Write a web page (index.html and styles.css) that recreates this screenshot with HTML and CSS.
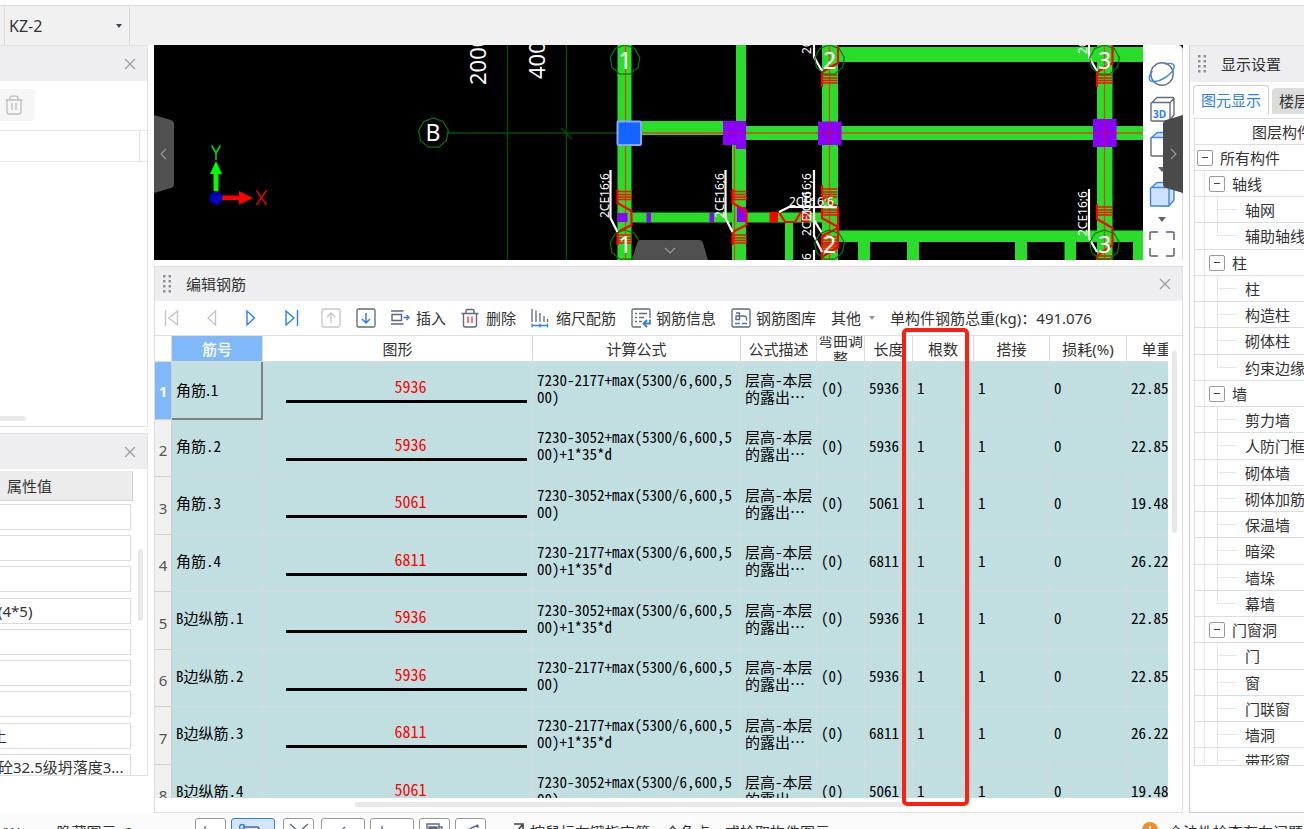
FILE: index.html
```html
<!DOCTYPE html>
<html lang="zh-CN">
<head>
<meta charset="utf-8">
<title>编辑钢筋</title>
<link rel="stylesheet" href="styles.css">
</head>
<body>
<header class="topbar">
  <label class="component-picker"><span class="sr">构件</span>
    <select><option>KZ-2</option></select>
    <svg class="caret" width="6" height="4" viewBox="0 0 6 4"><path d="M0 0h6L3 4z" fill="#3f4a5c"/></svg>
  </label>
</header>

<main class="workspace">
  <aside class="left">
    <section class="panel list-panel">
      <div class="panel-head"><button class="close" aria-label="关闭"><svg width="12" height="12" viewBox="0 0 12 12"><path d="M1 1l10 10M11 1L1 11" stroke="#a0a0a4" stroke-width="1.4"/></svg></button></div>
      <div class="list-tools"><button class="delete" aria-label="删除"><svg width="18" height="20" viewBox="0 0 18 20" fill="none" stroke="#bdbdbd" stroke-width="1.3"><path d="M.5 5h17M5 5V3q0-1.800 2-1.800h4q2 0 2 1.800v2M2 5v12q0 2 2 2h10q2 0 2-2V5M7 8v7M11 8v7"/></svg></button></div>
      <div class="list-columns"><span></span></div>
      <div class="list-body"><span class="thumb-x"></span></div>
    </section>
    <section class="panel props-panel">
      <div class="panel-head"><button class="close" aria-label="关闭"><svg width="12" height="12" viewBox="0 0 12 12"><path d="M1 1l10 10M11 1L1 11" stroke="#a0a0a4" stroke-width="1.4"/></svg></button></div>
      <div class="props-body">
        <div class="props-main">
          <h2>属性值</h2>
          <div class="props-fields">
            <input aria-label="属性1"><input aria-label="属性2"><input aria-label="属性3">
            <input class="nudge" aria-label="属性4" value="(4*5)">
            <input aria-label="属性5"><input aria-label="属性6"><input aria-label="属性7">
            <input class="cut" aria-label="属性8" value="土">
            <input class="nudge" aria-label="属性9" value="砼32.5级坍落度3...">
          </div>
        </div>
        <span class="thumb-y"></span>
      </div>
    </section>
  </aside>

  <div class="center">
    <section class="viewport">
      <svg class="drawing" viewBox="154 45 989 215" preserveAspectRatio="xMinYMin slice">
        <defs>
          <polygon id="ring" points="0,-15 9.600,-11.500 14.800,-2.600 13,7.500 5.100,14.100 -5.100,14.100 -13,7.500 -14.800,-2.600 -9.600,-11.500" fill="none" stroke="#087808" stroke-width="1.200"/>
          <g id="hatch" fill="none" stroke="#f01404" stroke-width="1.600"><path d="M0 0H15M0 3H15M0 5.500H15M0 8H15"/></g>
          <g id="bend" fill="none" stroke="#f00" stroke-width="2.200"><path d="M617.500 189v14l14 8v14l-14 7v13"/></g>
          <g id="leader" fill="none" stroke="#fff" stroke-width="2.200"><path d="M610.500 170v48l7 14"/></g>
        </defs>
        <g stroke="#004d00" stroke-width="1.500" fill="none">
          <path d="M507.500 45V260M566.500 45V260M448 133H629M561 128l11 11"/>
        </g>
        <g fill="#2bdd2b">
          <path d="M617.500 45h14v215h-14zM736 45h10v215h-10zM732 140h4v120h-4zM631 121h105v14H631zM746 126h397v14H746zM631 212.500h205v10H631zM822 45h16v215h-16zM1097 45h15.500v215H1097zM838 47h305v15H838zM838 230.500h305V242H838zM858 242h12v18h-12zM907 242h12v18h-12zM1015 242h12v18h-12zM1064.500 242H1076v18h-11.500zM1133 242h10v18h-10zM785 222h8v38h-8z"/>
        </g>
        <g stroke="#cf4a18" stroke-width="1.300" fill="none">
          <path d="M625.500 45V260M829.500 45V260M1104.500 45V260M629 133H1143M734.500 133V260"/>
        </g>
        <g fill="#8b00ff">
          <path d="M723 121h23v28h-10v-4h-13zM818 121.500h23.500V145H818zM1093 119h23.500v28H1093zM617.500 213h10v9h-10zM646.500 213h4.500v9h-4.500zM709.500 213h4.500v9h-4.500zM737 207h9v15h-9z"/>
        </g>
        <path d="M829.500 121v24M1104.500 119v28M723 133h23M818 133h23M1093 133h23" stroke="#b8105c" stroke-width="1.200"/>
        <rect x="617.500" y="121.500" width="23.500" height="23.500" rx="1" fill="#1464ff" stroke="#86a8ff" stroke-width="2"/>
        <path d="M625.500 132v-10" stroke="#2b50d0" stroke-width="1"/>
        <use href="#hatch" x="617" y="191.500"/><use href="#hatch" x="617" y="235"/><use href="#bend"/>
        <use href="#hatch" x="732" y="191.500"/><use href="#hatch" x="732" y="235"/><use href="#bend" x="115"/>
        <use href="#hatch" x="822.500" y="75"/><use href="#hatch" x="1097.500" y="75"/>
        <use href="#hatch" x="822.500" y="189"/><use href="#hatch" x="822.500" y="207"/><use href="#hatch" x="822.500" y="237"/><use href="#hatch" x="822.500" y="244"/>
        <use href="#hatch" x="1097.500" y="207"/><use href="#hatch" x="1097.500" y="256"/>
        <g fill="none" stroke="#f00" stroke-width="2.200">
          <path d="M838 45v18l-16 9v15M1112.500 45v18l-15.500 9v15M822 185v13l16 9v40l-16 10M822 203v15l16 9M838 228l-16 8v24M1097 204v15l15.500 9v17l-15.500 11v4M779 212l6 10h10l6-10"/>
        </g>
        <path d="M769.500 212h8.500v10.500h-8.500zM801 212h8.500v10.500H801z" fill="#f00"/>
        <use href="#leader"/><use href="#leader" x="115"/>
        <path d="M814 170v66l8 16M814 220l8 13M779 212l10-5h48M814 45v12l8 14M1089 45v12l8 14M1089 189v49l8 14M814 250v10" fill="none" stroke="#fff" stroke-width="2.200"/>
        <g class="bar-text">
          <text transform="translate(609 218) rotate(-90)">2CE16;6</text>
          <text transform="translate(724 218) rotate(-90)">2CE16;6</text>
          <text transform="translate(811 218) rotate(-90)">2CE16;6</text>
          <text transform="translate(811 236) rotate(-90)">2CE16;6</text>
          <text transform="translate(811 54) rotate(-90)">2CE16;6</text>
          <text transform="translate(1087 54) rotate(-90)">2CE16;6</text>
          <text transform="translate(1087 236) rotate(-90)">2CE16;6</text>
          <text transform="translate(811 298) rotate(-90)">2CE16;6</text>
          <text x="789" y="206">2CE16;6</text>
        </g>
        <use href="#ring" x="433.500" y="133"/><use href="#ring" x="625" y="60"/><use href="#ring" x="625" y="245"/>
        <use href="#ring" x="829.500" y="60"/><use href="#ring" x="829.500" y="245"/><use href="#ring" x="1104.500" y="60"/><use href="#ring" x="1104.500" y="245"/>
        <g class="axis-text" text-anchor="middle">
          <text x="433" y="141">B</text><text x="625" y="69">1</text><text x="625" y="253">1</text>
          <text x="829.500" y="69">2</text><text x="829.500" y="253">2</text><text x="1104.500" y="69">3</text><text x="1104.500" y="253">3</text>
        </g>
        <g class="dim-text">
          <text transform="translate(486 85) rotate(-90)">2000</text>
          <text transform="translate(545 79) rotate(-90)">4000</text>
        </g>
        <path d="M213.500 191V174H210l6-13 6 13h-3.500v17z" fill="#0f0"/>
        <path d="M222 195.500h17V191l14 7-14 6.500V200h-17z" fill="#f00"/>
        <circle cx="216" cy="198" r="6.500" fill="#0000bc"/>
        <path d="M211.500 145.500l4.500 7.500 4.500-7.500M216 153v7" fill="none" stroke="#00e400" stroke-width="1.500"/>
        <path d="M256.500 190.500l10 14.500M266.500 190.500l-10 14.500" fill="none" stroke="#e40000" stroke-width="1.500"/>
      </svg>
      <div class="view-tools">
        <button aria-label="动态观察"><svg width="28" height="26" viewBox="0 0 28 26" fill="none" stroke-width="1.400"><circle cx="14" cy="13" r="11.200" stroke="#6a7183"/><path d="M4.500 10C-1 17 1 21 6 20.500 14 20 24 13 26 7 27 3 24 1.500 17 3" stroke="#3d87ee"/></svg></button>
        <button aria-label="三维"><svg width="26" height="26" viewBox="0 0 26 26" fill="none" stroke="#636b7d" stroke-width="1.400"><path d="M3 6.500h17q1 0 1 1V24q0 1-1 1H3q-1 0-1-1V7.500q0-1 1-1zM3 6.500L8 1.500h16q1 0 1 1L20.500 7M25 2.500V19l-4.500 5.500"/><text x="4" y="22" class="three-d">3D</text></svg></button>
        <button class="with-caret" aria-label="俯视"><svg width="26" height="26" viewBox="0 0 26 26" fill="none" stroke="#636b7d" stroke-width="1.400"><path d="M2 7v17q0 1 1 1h17q1 0 1-1V7"/><path d="M2.500 6.500l6-5H25l-5 5z" fill="#cfe1fb" stroke="#3d87ee"/><path d="M25 2v17l-4.500 5.500"/></svg><svg width="8" height="5" viewBox="0 0 8 5"><path d="M0 0h8L4 5z" fill="#59617a"/></svg></button>
        <button class="with-caret" aria-label="实体显示"><svg width="26" height="26" viewBox="0 0 26 26" fill="#cfe1fb" stroke="#3d87ee" stroke-width="1.400"><path d="M2.500 6.500L8 1.500h16q1 0 1 1V19l-5 6-17-1z"/><rect x="1.500" y="6.500" width="18.500" height="18.500" rx="1"/><path d="M20 6.500l5-4.500"/></svg><svg width="8" height="5" viewBox="0 0 8 5"><path d="M0 0h8L4 5z" fill="#59617a"/></svg></button>
        <button aria-label="全屏"><svg width="26" height="26" viewBox="0 0 26 26" fill="none" stroke="#59617a" stroke-width="1.500"><path d="M1 9V2q0-1 1-1h7M17 1h7q1 0 1 1v7M25 17v7q0 1-1 1h-7M9 25H2q-1 0-1-1v-7"/></svg></button>
      </div>
      <button class="handle handle-left" aria-label="收起左侧"><svg width="20" height="78" viewBox="0 0 20 78"><path d="M0 0l17 5q3 1 3 4v60q0 3-3 4L0 78z" fill="#505050"/><path d="M12 34l-5 5 5 5" fill="none" stroke="#999" stroke-width="1.200"/></svg></button>
      <button class="handle handle-bottom" aria-label="收起下方"><svg width="76" height="20" viewBox="0 0 76 20"><path d="M0 20L5 3q1-3 4-3h58q3 0 4 3l5 17z" fill="#505050"/><path d="M33 8l5 5 5-5" fill="none" stroke="#999" stroke-width="1.200"/></svg></button>
      <button class="handle handle-right" aria-label="收起右侧"><svg width="20" height="78" viewBox="0 0 20 78"><path d="M20 0L3 5Q0 6 0 9v60q0 3 3 4l17 5z" fill="#4a4a4a"/><path d="M8 34l5 5-5 5" fill="none" stroke="#999" stroke-width="1.200"/></svg></button>
    </section>

    <section class="rebar">
      <div class="panel-head titled"><svg class="grip" width="8" height="18" viewBox="0 0 8 18" fill="#8e9096"><path d="M0 0h2.500v2.500H0zM5.500 0H8v2.500H5.500zM0 5h2.500v2.500H0zM5.500 5H8v2.500H5.500zM0 10h2.500v2.500H0zM5.500 10H8v2.500H5.500zM0 15h2.500v2.500H0zM5.500 15H8v2.500H5.500z"/></svg><h2>编辑钢筋</h2><button class="close" aria-label="关闭"><svg width="12" height="12" viewBox="0 0 12 12"><path d="M1 1l10 10M11 1L1 11" stroke="#a0a0a4" stroke-width="1.400"/></svg></button></div>
      <div class="toolbar">
        <div class="nav">
          <button aria-label="第一条"><svg width="20" height="20" viewBox="0 0 20 20" fill="none" stroke="#c6c6c6" stroke-width="1.400"><path d="M4.500 2v16M16.500 3v14L8 10z"/></svg></button>
          <button aria-label="上一条"><svg width="20" height="20" viewBox="0 0 20 20" fill="none" stroke="#c6c6c6" stroke-width="1.400"><path d="M14.500 3v14L7 10z"/></svg></button>
          <button aria-label="下一条"><svg width="20" height="20" viewBox="0 0 20 20" fill="none" stroke="#2e80ee" stroke-width="1.400"><path d="M6 3v14l7.500-7z"/></svg></button>
          <button aria-label="最后一条"><svg width="20" height="20" viewBox="0 0 20 20" fill="none" stroke="#2e80ee" stroke-width="1.400"><path d="M16.500 2v16M5 3v14l8-7z"/></svg></button>
        </div>
        <button aria-label="上移"><svg width="20" height="20" viewBox="0 0 20 20" fill="none" stroke="#c6c6c6" stroke-width="1.300"><rect x="1" y="1" width="18" height="18" rx="1.500"/><path d="M10 15V5.500M6 9l4-4 4 4"/></svg></button>
        <button aria-label="下移"><svg width="20" height="20" viewBox="0 0 20 20" fill="none" stroke="#5f6880" stroke-width="1.300"><rect x="1" y="1" width="18" height="18" rx="1.500"/><path d="M10 5v9.500M6 11l4 4 4-4" stroke="#2e80ee" stroke-width="1.500"/></svg></button>
        <button><svg width="20" height="20" viewBox="0 0 20 20" fill="none" stroke="#5f6880" stroke-width="1.400"><path d="M0 3h12.500M0 16h12.500M1 6.500h9.500v6H1z"/><path d="M12.500 9.500H18M15.500 7l2.500 2.500-2.500 2.500" stroke="#2e80ee"/></svg>插入</button>
        <button><svg width="20" height="20" viewBox="0 0 20 20" fill="none" stroke="#5f6880" stroke-width="1.400"><path d="M.5 5.500h17M5 5.500v-3q0-1 1-1h6q1 0 1 1v3M2.500 5.500V17q0 2 2 2h9q2 0 2-2V5.500"/><path d="M7 8.500V15M11 8.500V15" stroke="#e84040"/></svg>删除</button>
        <button><svg width="20" height="20" viewBox="0 0 20 20" fill="none" stroke="#5f6880" stroke-width="1.300"><path d="M1 1v13M5 2.500V14M9 5v9M13 8v6M16.500 11v3"/><path d="M1 17.500h16M1 15.500v4M9 15.500v4M16.500 15.500v4" stroke="#2e80ee"/></svg>缩尺配筋</button>
        <button><svg width="20" height="20" viewBox="0 0 20 20" fill="none" stroke="#5f6880" stroke-width="1.300"><path d="M10 19H2.500Q1 19 1 17.500v-15Q1 1 2.500 1h15Q19 1 19 2.500V10M4 5.500h2M8 5.500h8M4 9.500h2M8 9.500h5M4 13.500h2M8 13.500h3"/><path d="M19 11.500v4h-6M16 12l-3.500 3.500L16 19" stroke="#2e80ee" stroke-width="1.800"/></svg>钢筋信息</button>
        <button><svg width="20" height="20" viewBox="0 0 20 20" fill="none" stroke="#5f6880" stroke-width="1.300"><path d="M1 2.500q0-1.500 1.500-1.500h15Q19 1 19 2.500v15q0 1.500-1.500 1.500h-15Q1 19 1 17.500z"/><path d="M5 5h3.500v6.500H5V8h7.500q3 0 3 2v2.500" /><path d="M4 15.500h5M11 15.500h5" stroke="#2e80ee" stroke-width="1.600"/></svg>钢筋图库</button>
        <button class="more">其他<svg width="6" height="4" viewBox="0 0 6 4"><path d="M0 0h6L3 4z" fill="#999"/></svg></button>
        <p class="total">单构件钢筋总重(kg)：491.076</p>
      </div>
      <div class="grid-area">
        <div class="grid-view">
          <table class="rebar-table">
            <colgroup><col class="c-no"><col class="c-name"><col class="c-shape"><col class="c-formula"><col class="c-desc"><col class="c-adjust"><col class="c-length"><col class="c-count"><col class="c-lap"><col class="c-loss"><col class="c-weight"></colgroup>
            <thead><tr><th></th><th class="active">筋号</th><th>图形</th><th>计算公式</th><th>公式描述</th><th class="tall"><div>弯曲调整</div></th><th>长度</th><th>根数</th><th>搭接</th><th>损耗(%)</th><th>单重</th></tr></thead>
            <tbody>
              <tr class="current"><th>1</th><td>角筋.1</td><td class="shape"><span>5936</span></td><td>7230-2177+max(5300/6,600,5<br>00)</td><td>层高-本层<br>的露出⋯</td><td>(0)</td><td>5936</td><td>1</td><td>1</td><td>0</td><td>22.85</td></tr>
              <tr><th>2</th><td>角筋.2</td><td class="shape"><span>5936</span></td><td>7230-3052+max(5300/6,600,5<br>00)+1*35*d</td><td>层高-本层<br>的露出⋯</td><td>(0)</td><td>5936</td><td>1</td><td>1</td><td>0</td><td>22.85</td></tr>
              <tr><th>3</th><td>角筋.3</td><td class="shape"><span>5061</span></td><td>7230-3052+max(5300/6,600,5<br>00)</td><td>层高-本层<br>的露出⋯</td><td>(0)</td><td>5061</td><td>1</td><td>1</td><td>0</td><td>19.48</td></tr>
              <tr><th>4</th><td>角筋.4</td><td class="shape"><span>6811</span></td><td>7230-2177+max(5300/6,600,5<br>00)+1*35*d</td><td>层高-本层<br>的露出⋯</td><td>(0)</td><td>6811</td><td>1</td><td>1</td><td>0</td><td>26.22</td></tr>
              <tr><th>5</th><td>B边纵筋.1</td><td class="shape"><span>5936</span></td><td>7230-3052+max(5300/6,600,5<br>00)+1*35*d</td><td>层高-本层<br>的露出⋯</td><td>(0)</td><td>5936</td><td>1</td><td>1</td><td>0</td><td>22.85</td></tr>
              <tr><th>6</th><td>B边纵筋.2</td><td class="shape"><span>5936</span></td><td>7230-2177+max(5300/6,600,5<br>00)</td><td>层高-本层<br>的露出⋯</td><td>(0)</td><td>5936</td><td>1</td><td>1</td><td>0</td><td>22.85</td></tr>
              <tr><th>7</th><td>B边纵筋.3</td><td class="shape"><span>6811</span></td><td>7230-2177+max(5300/6,600,5<br>00)+1*35*d</td><td>层高-本层<br>的露出⋯</td><td>(0)</td><td>6811</td><td>1</td><td>1</td><td>0</td><td>26.22</td></tr>
              <tr><th>8</th><td>B边纵筋.4</td><td class="shape"><span>5061</span></td><td>7230-3052+max(5300/6,600,5<br>00)</td><td>层高-本层<br>的露出⋯</td><td>(0)</td><td>5061</td><td>1</td><td>1</td><td>0</td><td>19.48</td></tr>
            </tbody>
          </table>
        </div>
        <span class="grid-thumb-y"></span>
      </div>
      <div class="grid-scroll"><span class="grid-thumb-x"></span></div>
      <div class="mark"></div>
    </section>
  </div>

  <aside class="display">
    <div class="panel-head titled"><svg class="grip" width="8" height="18" viewBox="0 0 8 18" fill="#8e9096"><path d="M0 0h2.500v2.500H0zM5.500 0H8v2.500H5.500zM0 5h2.500v2.500H0zM5.500 5H8v2.500H5.500zM0 10h2.500v2.500H0zM5.500 10H8v2.500H5.500zM0 15h2.500v2.500H0zM5.500 15H8v2.500H5.500z"/></svg><h2>显示设置</h2></div>
    <div class="tabs"><button class="on">图元显示</button><button>楼层显示</button></div>
    <div class="tree">
      <div class="tree-head">图层构件</div>
      <ul>
        <li class="root"><button aria-label="折叠"></button>所有构件</li>
        <li class="group"><button aria-label="折叠"></button>轴线</li>
        <li class="leaf">轴网</li>
        <li class="leaf last">辅助轴线</li>
        <li class="group"><button aria-label="折叠"></button>柱</li>
        <li class="leaf">柱</li>
        <li class="leaf">构造柱</li>
        <li class="leaf">砌体柱</li>
        <li class="leaf last">约束边缘</li>
        <li class="group"><button aria-label="折叠"></button>墙</li>
        <li class="leaf">剪力墙</li>
        <li class="leaf">人防门框</li>
        <li class="leaf">砌体墙</li>
        <li class="leaf">砌体加筋</li>
        <li class="leaf">保温墙</li>
        <li class="leaf">暗梁</li>
        <li class="leaf">墙垛</li>
        <li class="leaf last">幕墙</li>
        <li class="group"><button aria-label="折叠"></button>门窗洞</li>
        <li class="leaf">门</li>
        <li class="leaf">窗</li>
        <li class="leaf">门联窗</li>
        <li class="leaf">墙洞</li>
        <li class="leaf">带形窗</li>
      </ul>
    </div>
  </aside>
</main>

<footer class="status">
  <p class="status-left"><span>/W</span><span>隐藏图元: 0</span></p>
  <div class="snaps">
    <button class="s" aria-label="正交"><svg width="18" height="18" viewBox="0 0 18 18"><path d="M3 3v13h13"/></svg></button>
    <button class="w on" aria-label="对象捕捉"><svg width="28" height="18" viewBox="0 0 28 18"><path d="M4 4h14q2 0 2 2v10M3 6v10"/><circle cx="3" cy="4" r="2.500" stroke="#2e80ee"/></svg></button>
    <button class="s wide-gap" aria-label="交点"><svg width="20" height="18" viewBox="0 0 20 18"><path d="M1 1l18 16M19 1L1 17"/></svg></button>
    <button class="w" aria-label="垂点"><svg width="28" height="18" viewBox="0 0 28 18"><path d="M16 4L6 14h16"/></svg></button>
    <button class="w" aria-label="中点"><svg width="28" height="18" viewBox="0 0 28 18"><path d="M4 3v12h20"/></svg></button>
    <button class="s" aria-label="顶点"><svg width="18" height="18" viewBox="0 0 18 18"><path d="M1 1h12v14H1zM13 4h3v11"/><path d="M3 4h8v8H3z" fill="#5f6880"/></svg></button>
    <button class="s" aria-label="坐标"><svg width="20" height="18" viewBox="0 0 20 18"><path d="M2 9L17 2M2 9l3-1M17 5V2"/></svg></button>
  </div>
  <p class="hint"><svg width="12" height="14" viewBox="0 0 12 14" fill="none" stroke="#444" stroke-width="1.600"><path d="M2 1h9v9M11 1L1 13"/></svg>按鼠标左键指定第一个角点，或拾取构件图元</p>
  <p class="check"><svg width="16" height="16" viewBox="0 0 16 16"><circle cx="8" cy="8" r="8" fill="#f58a2b"/><path d="M8 4v5M8 11v2" stroke="#fff" stroke-width="2"/></svg>合法性检查存在问题</p>
</footer>
</body>
</html>
```

FILE: styles.css
```css
* { box-sizing: border-box; }

body {
  margin: 0;
  height: 100vh;
  display: flex;
  flex-direction: column;
  overflow: hidden;
  background: #fff;
  color: #333;
  font: 15px/20px "Noto Sans", "Noto Sans CJK SC", sans-serif;
}

button, input, select { font: inherit; color: inherit; }
button { border: 0; padding: 0; background: none; display: flex; align-items: center; }
h2, p, ul { margin: 0; padding: 0; font-size: 15px; font-weight: 400; list-style: none; }
svg { display: block; flex: none; }
.sr { position: absolute; width: 1px; height: 1px; overflow: hidden; clip-path: inset(50%); }

.topbar {
  flex: none;
  height: 40px;
  margin-top: 5px;
  padding-left: 4px;
  border-top: 1px solid #dcdcdc;
  background: #f1f1f1;
  display: flex;
}
.component-picker {
  position: relative;
  width: 126px;
  display: flex;
  border: solid #dadada;
  border-width: 0 1px;
}
.component-picker select {
  appearance: none;
  flex: 1;
  border: 0;
  padding: 0 4px;
  background: none;
  font-size: 16px;
}
.caret { position: absolute; right: 7px; top: 18px; }

.workspace {
  flex: 1;
  min-height: 0;
  display: grid;
  grid-template-columns: 149px minmax(0, 1fr) 115px;
}

.left {
  padding-right: 1px;
  padding-bottom: 37px;
  display: flex;
  flex-direction: column;
  gap: 6px;
  min-height: 0;
}
.panel { border: solid #e2e2e4; border-width: 1px 1px 1px 0; display: flex; flex-direction: column; overflow: hidden; }
.list-panel { flex: 1; }
.props-panel { flex: none; height: 343px; }
.panel-head {
  flex: none;
  height: 36px;
  padding: 0 11px;
  background: #eeeef0;
  display: flex;
  align-items: center;
}
.left .panel-head { height: 35px; }
.panel-head .close { margin-left: auto; }
.list-tools { height: 49px; padding-top: 8px; }
.delete { width: 35px; height: 32px; padding-left: 5px; border-radius: 0 4px 4px 0; background: #f6f6f6; }
.list-columns { height: 32px; border: solid #e6e6e6; border-width: 1px 0; display: flex; }
.list-columns span { width: 140px; border-right: 1px solid #e2e2e2; }
.list-body { flex: 1; display: flex; align-items: flex-end; padding-bottom: 5px; }
.thumb-x { width: 26px; height: 5px; border-radius: 0 3px 3px 0; background: #e8e8e8; }

.props-body { display: flex; padding-top: 2px; }
.props-main { width: 133px; }
.props-main h2 {
  height: 30px;
  padding-left: 7px;
  line-height: 30px;
  border: solid #d4d4d4;
  border-width: 0 1px 1px 0;
  background: #ececec;
}
.props-fields { height: 284px; padding-top: 3px; display: grid; grid-template-rows: repeat(9, 1fr); }
.props-fields input {
  width: 131px;
  height: 26px;
  padding: 0;
  border: 1px solid #dcdcdc;
  border-left: 0;
  background: #fff;
}
.props-fields .nudge { text-indent: -2px; }
.props-fields .cut { text-indent: -8px; }
.thumb-y { width: 5px; height: 72px; margin: 78px 0 0 5px; border-radius: 3px; background: #e8e8e8; }

.center { padding: 0 6px 0 5px; display: flex; flex-direction: column; min-height: 0; }
.viewport {
  position: relative;
  flex: none;
  height: 215px;
  background: #000;
  display: flex;
}
.drawing { flex: 1; min-width: 0; height: 215px; }
.bar-text { font: 12px "Noto Sans", sans-serif; fill: #fff; }
.axis-text { font: 23px "Noto Sans", sans-serif; fill: #fff; }
.dim-text { font: 22px "Noto Sans", sans-serif; fill: #fff; }
.view-tools {
  width: 40px;
  padding: 16px 2px 3px 0;
  border-right: 1px solid #dcdcdc;
  border-radius: 0 5px 0 0;
  background: #fff;
  display: flex;
  flex-direction: column;
  align-items: center;
  justify-content: space-between;
}
.with-caret { flex-direction: column; gap: 10px; }
.three-d { font: 700 10px "Open Sans", sans-serif; fill: #2e80ee; stroke: none; }
.handle { position: absolute; }
.handle-left { left: 0; top: 70px; }
.handle-right { right: 0; top: 70px; }
.handle-bottom { left: 478px; bottom: 0; }

.rebar {
  position: relative;
  flex: 1;
  min-height: 0;
  margin-top: 6px;
  border: 1px solid #dedee0;
  display: flex;
  flex-direction: column;
}
.titled { padding-left: 8px; gap: 15px; }
.rebar .panel-head { height: 34px; }
.toolbar {
  flex: none;
  height: 34px;
  padding-left: 6px;
  display: flex;
  align-items: center;
  gap: 15px;
  white-space: nowrap;
}
.nav { display: flex; gap: 20px; margin-right: 5px; }
.toolbar button { gap: 5px; }
.toolbar .more { gap: 8px; }

.grid-area { flex: 1; min-height: 0; display: flex; border-top: 1px solid #e0e0e0; }
.grid-view { flex: 1; min-width: 0; overflow: hidden; }
.grid-thumb-y { width: 5px; height: 182px; margin: 15px 5px 0 4px; border-radius: 3px; background: #e8e8e8; }
.grid-scroll { flex: none; height: 14px; padding: 4px 0 0 200px; }
.grid-thumb-x { display: block; width: 550px; height: 5px; border-radius: 3px; background: #e8e8e8; }

.rebar-table { width: 1032px; table-layout: fixed; border-collapse: separate; border-spacing: 0; }
.c-no { width: 17px; }
.c-name { width: 91px; }
.c-shape { width: 270px; }
.c-formula { width: 208px; }
.c-desc { width: 76px; }
.c-adjust { width: 48px; }
.c-length { width: 48px; }
.c-count { width: 61px; }
.c-lap { width: 76px; }
.c-loss { width: 77px; }
.c-weight { width: 60px; }
.rebar-table th { padding: 0; font-weight: 400; text-align: center; white-space: nowrap; }
.rebar-table thead th { height: 26px; border: solid #dcdcdc; border-width: 0 1px 1px 0; }
.rebar-table thead .active { background: #80b9fa; color: #fff; font-weight: 500; }
.tall div {
  height: 25px;
  display: flex;
  align-items: center;
  justify-content: center;
  overflow: hidden;
  line-height: 18px;
  white-space: normal;
}
.rebar-table tbody th { padding-top: 4px; border: solid #cfcfcf; border-width: 0 1px 1px 0; background: #f0f0f0; color: #555; }
.rebar-table td {
  height: 57px;
  padding: 0 0 6px 4px;
  border: solid #d5dada;
  border-width: 0 1px 1px 0;
  background: #c1dfe1;
  color: #000;
  font: 15px/17px "Noto Sans CJK SC", sans-serif;
  font-feature-settings: "hwid";
  white-space: nowrap;
}
.rebar-table tbody tr:nth-child(odd) td { height: 58px; }
.rebar-table .current th { padding-top: 0; background: #80b9fa; color: #fff; font-weight: 700; }
.rebar-table .current td:nth-child(2) {
  padding-bottom: 2px;
  border: solid #808080;
  border-width: 0 2px 2px 0;
  font-feature-settings: normal;
}
.rebar-table .shape { padding: 0 5px 1px 23px; text-align: center; font-size: 16px; }
.shape span { display: block; height: 26px; padding-left: 8px; border-bottom: 3px solid #000; color: #f00; line-height: 19px; }

.mark {
  position: absolute;
  left: 747px;
  top: 61px;
  bottom: 6px;
  width: 67px;
  border: 4px solid #ff1e0f;
  border-radius: 5px;
}

.display {
  min-width: 0;
  border: solid #d0d0d2;
  border-width: 0 0 1px 1px;
  overflow: hidden;
  white-space: nowrap;
}
.display .panel-head { height: 37px; border-top: 1px solid #e2e2e4; }
.tabs { display: flex; align-items: flex-end; gap: 3px; padding: 3px 0 0 3px; height: 32px; }
.tabs button { flex: none; height: 26px; padding: 0 7px; border-radius: 4px 4px 0 0; background: #dcdcdc; }
.tabs .on { height: 29px; border: solid #d0d0d2; border-width: 1px 1px 0; background: #fff; color: #2e80ee; }
.tree { margin: 4px 0 0 4px; height: 648px; overflow: hidden; border: solid #dedede; border-width: 1px 0 1px 1px; }
.tree-head { height: 26px; padding-left: 57px; line-height: 26px; border-bottom: 1px solid #dedede; }
.tree li {
  height: 26px;
  display: flex;
  align-items: center;
  border-bottom: 1px solid #dedede;
  background: linear-gradient(#e8e8e8, #e8e8e8) 9px 0 / 1px 100% no-repeat;
}
.tree li:nth-child(4n) { height: 27px; }
.tree li button { width: 16px; height: 16px; margin-right: 7px; border: 1px solid #999; border-radius: 2px; background: #fff; justify-content: center; }
.tree li button::before { content: ""; width: 6px; height: 1px; background: #444; }
.tree .root { padding-left: 2px; background: none; }
.tree .group { padding-left: 14px; }
.tree .leaf {
  padding-left: 50px;
  background:
    linear-gradient(#e8e8e8, #e8e8e8) 9px 0 / 1px 100% no-repeat,
    linear-gradient(#e8e8e8, #e8e8e8) 22px 0 / 1px 100% no-repeat,
    linear-gradient(#e8e8e8, #e8e8e8) 22px 12px / 20px 1px no-repeat;
}
.tree .last {
  background:
    linear-gradient(#e8e8e8, #e8e8e8) 9px 0 / 1px 100% no-repeat,
    linear-gradient(#e8e8e8, #e8e8e8) 22px 0 / 1px 12px no-repeat,
    linear-gradient(#e8e8e8, #e8e8e8) 22px 12px / 20px 1px no-repeat;
}

.status {
  flex: none;
  height: 16px;
  padding-top: 5px;
  background: #fbfbfb;
  display: flex;
  align-items: flex-start;
  overflow: hidden;
  white-space: nowrap;
}
.status p { padding-top: 4px; }
.status-left { width: 195px; display: flex; gap: 37px; }
.snaps { width: 317px; display: flex; gap: 5px; }
.snaps button { height: 28px; border: 1px solid #999; border-radius: 3px; background: #fff; justify-content: center; }
.snaps svg { fill: none; stroke: #5f6880; stroke-width: 1.4px; }
.snaps .s { width: 31px; }
.snaps .w { width: 44px; }
.snaps .on { border-color: #2e80ee; background: #d3e5fc; }
.snaps .wide-gap { margin: 0 2px 0 3px; }
.hint, .check { display: flex; gap: 6px; }
.check { margin-left: auto; padding-right: 1px; gap: 10px; }
.hint svg { margin-top: 1px; }
```
